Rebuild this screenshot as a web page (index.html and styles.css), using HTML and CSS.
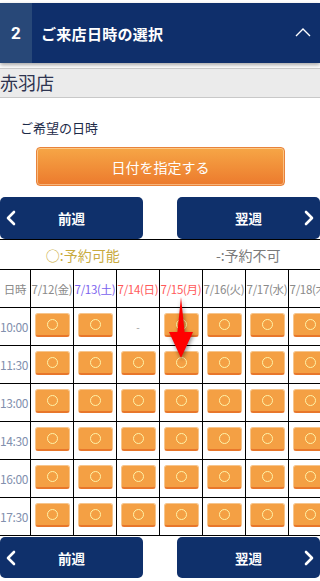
FILE: index.html
```html
<!DOCTYPE html>
<html lang="ja">
<head>
<meta charset="utf-8">
<title>ご来店日時の選択</title>
<link rel="stylesheet" href="styles.css">
</head>
<body>
<div class="page">
  <header class="step-head">
    <span class="step-num">2</span>
    <h2 class="step-title">ご来店日時の選択</h2>
    <svg class="step-toggle" width="16" height="10" viewBox="0 0 16 10"><polyline points="1,9 8,2 15,9" fill="none" stroke="#fff" stroke-width="1.4"/></svg>
  </header>

  <div class="store">赤羽店</div>

  <p class="hope-label">ご希望の日時</p>
  <button class="date-btn">日付を指定する</button>

  <nav class="week-nav top">
    <button class="week-btn prev">
      <svg class="chev" width="10" height="16" viewBox="0 0 10 16"><polyline points="8,2 2,8 8,14" fill="none" stroke="#fff" stroke-width="2.6" stroke-linecap="round" stroke-linejoin="round"/></svg>
      <span>前週</span>
    </button>
    <button class="week-btn next">
      <span>翌週</span>
      <svg class="chev" width="10" height="16" viewBox="0 0 10 16"><polyline points="2,2 8,8 2,14" fill="none" stroke="#fff" stroke-width="2.6" stroke-linecap="round" stroke-linejoin="round"/></svg>
    </button>
  </nav>

  <div class="schedule">
    <div class="schedule-inner">
      <div class="legend">
        <span class="legend-ok">○:予約可能</span>
        <span class="legend-ng">-:予約不可</span>
      </div>
      <div class="grid">
        <div class="cell head">日時</div>
        <div class="cell head">7/12(金)</div>
        <div class="cell head sat">7/13(土)</div>
        <div class="cell head sun">7/14(日)</div>
        <div class="cell head sun">7/15(月)</div>
        <div class="cell head">7/16(火)</div>
        <div class="cell head">7/17(水)</div>
        <div class="cell head">7/18(木)</div>

        <div class="cell time">10:00</div>
        <div class="cell slot"><button class="slot-btn"><i class="ring"></i></button></div>
        <div class="cell slot"><button class="slot-btn"><i class="ring"></i></button></div>
        <div class="cell none">-</div>
        <div class="cell slot"><button class="slot-btn"><i class="ring"></i></button></div>
        <div class="cell slot"><button class="slot-btn"><i class="ring"></i></button></div>
        <div class="cell slot"><button class="slot-btn"><i class="ring"></i></button></div>
        <div class="cell slot"><button class="slot-btn"><i class="ring"></i></button></div>

        <div class="cell time">11:30</div>
        <div class="cell slot"><button class="slot-btn"><i class="ring"></i></button></div>
        <div class="cell slot"><button class="slot-btn"><i class="ring"></i></button></div>
        <div class="cell slot"><button class="slot-btn"><i class="ring"></i></button></div>
        <div class="cell slot"><button class="slot-btn"><i class="ring"></i></button></div>
        <div class="cell slot"><button class="slot-btn"><i class="ring"></i></button></div>
        <div class="cell slot"><button class="slot-btn"><i class="ring"></i></button></div>
        <div class="cell slot"><button class="slot-btn"><i class="ring"></i></button></div>

        <div class="cell time">13:00</div>
        <div class="cell slot"><button class="slot-btn"><i class="ring"></i></button></div>
        <div class="cell slot"><button class="slot-btn"><i class="ring"></i></button></div>
        <div class="cell slot"><button class="slot-btn"><i class="ring"></i></button></div>
        <div class="cell slot"><button class="slot-btn"><i class="ring"></i></button></div>
        <div class="cell slot"><button class="slot-btn"><i class="ring"></i></button></div>
        <div class="cell slot"><button class="slot-btn"><i class="ring"></i></button></div>
        <div class="cell slot"><button class="slot-btn"><i class="ring"></i></button></div>

        <div class="cell time">14:30</div>
        <div class="cell slot"><button class="slot-btn"><i class="ring"></i></button></div>
        <div class="cell slot"><button class="slot-btn"><i class="ring"></i></button></div>
        <div class="cell slot"><button class="slot-btn"><i class="ring"></i></button></div>
        <div class="cell slot"><button class="slot-btn"><i class="ring"></i></button></div>
        <div class="cell slot"><button class="slot-btn"><i class="ring"></i></button></div>
        <div class="cell slot"><button class="slot-btn"><i class="ring"></i></button></div>
        <div class="cell slot"><button class="slot-btn"><i class="ring"></i></button></div>

        <div class="cell time">16:00</div>
        <div class="cell slot"><button class="slot-btn"><i class="ring"></i></button></div>
        <div class="cell slot"><button class="slot-btn"><i class="ring"></i></button></div>
        <div class="cell slot"><button class="slot-btn"><i class="ring"></i></button></div>
        <div class="cell slot"><button class="slot-btn"><i class="ring"></i></button></div>
        <div class="cell slot"><button class="slot-btn"><i class="ring"></i></button></div>
        <div class="cell slot"><button class="slot-btn"><i class="ring"></i></button></div>
        <div class="cell slot"><button class="slot-btn"><i class="ring"></i></button></div>

        <div class="cell time">17:30</div>
        <div class="cell slot"><button class="slot-btn"><i class="ring"></i></button></div>
        <div class="cell slot"><button class="slot-btn"><i class="ring"></i></button></div>
        <div class="cell slot"><button class="slot-btn"><i class="ring"></i></button></div>
        <div class="cell slot"><button class="slot-btn"><i class="ring"></i></button></div>
        <div class="cell slot"><button class="slot-btn"><i class="ring"></i></button></div>
        <div class="cell slot"><button class="slot-btn"><i class="ring"></i></button></div>
        <div class="cell slot"><button class="slot-btn"><i class="ring"></i></button></div>
      </div>
    </div>
  </div>

  <nav class="week-nav bottom">
    <button class="week-btn prev">
      <svg class="chev" width="10" height="16" viewBox="0 0 10 16"><polyline points="8,2 2,8 8,14" fill="none" stroke="#fff" stroke-width="2.6" stroke-linecap="round" stroke-linejoin="round"/></svg>
      <span>前週</span>
    </button>
    <button class="week-btn next">
      <span>翌週</span>
      <svg class="chev" width="10" height="16" viewBox="0 0 10 16"><polyline points="2,2 8,8 2,14" fill="none" stroke="#fff" stroke-width="2.6" stroke-linecap="round" stroke-linejoin="round"/></svg>
    </button>
  </nav>

  <svg class="pointer" width="30" height="66" viewBox="0 0 30 66">
    <polygon points="15,1 18.6,36 27,36 15,62 3,36 11.4,36" fill="#ff0000"/>
  </svg>
</div>
</body>
</html>
```

FILE: styles.css
```css
* { box-sizing: border-box; }

html, body {
  margin: 0;
  padding: 0;
  background: #fff;
}

body {
  font-family: "Noto Sans CJK JP", "Noto Sans", sans-serif;
  color: #333;
}

.page {
  position: relative;
  width: 320px;
  overflow: hidden;
  padding-top: 3px;
}

/* step header */
.step-head {
  display: flex;
  align-items: center;
  height: 60px;
  background: #0f2f6b;
  box-shadow: 0 2px 4px rgba(0, 0, 0, 0.35);
}

.step-num {
  width: 32px;
  height: 100%;
  display: flex;
  align-items: center;
  justify-content: center;
  background: #284878;
  color: #fff;
  font-family: "Roboto", "Noto Sans", sans-serif;
  font-weight: 700;
  font-size: 17px;
}

.step-title {
  flex: 1;
  margin: 0;
  padding-left: 9px;
  color: #fff;
  font-size: 15px;
  font-weight: 700;
  letter-spacing: 0.3px;
}

.step-toggle {
  margin-right: 9px;
  margin-top: -2px;
}

/* store band */
.store {
  margin-top: 5px;
  height: 30px;
  border-top: 1px solid #c8c8c8;
  border-bottom: 1px solid #c8c8c8;
  background: #ebebeb;
  font-size: 18px;
  line-height: 27px;
  color: #2e3450;
}

.hope-label {
  margin: 21px 0 0 20px;
  font-size: 13px;
  line-height: 18px;
  color: #1c2a48;
}

.date-btn {
  display: block;
  margin: 10px 0 0 36px;
  width: 249px;
  height: 39px;
  border: 1px solid #e9823a;
  border-radius: 4px;
  background: linear-gradient(#f6a646, #ec7a2d);
  box-shadow: inset 0 0 0 1px rgba(255, 230, 190, 0.55);
  color: #fff;
  font-family: inherit;
  font-size: 14px;
  padding: 0;
}

/* week navigation */
.week-nav {
  display: flex;
  justify-content: space-between;
}

.week-nav.top { margin-top: 11px; }
.week-nav.bottom { margin-top: 1px; }

.week-btn {
  position: relative;
  width: 143px;
  height: 42px;
  border: none;
  border-radius: 5px;
  background: #0f306b;
  color: #fff;
  font-family: inherit;
  font-size: 13.5px;
  font-weight: 700;
  display: flex;
  align-items: center;
  justify-content: center;
  padding: 0;
}

.week-nav.bottom .week-btn { height: 41px; }

.week-btn .chev {
  position: absolute;
  top: 50%;
  margin-top: -8px;
}

.week-btn.prev .chev { left: 6px; }
.week-btn.next .chev { right: 6px; }

/* schedule */
.schedule {
  width: 320px;
  overflow: hidden;
}

.schedule-inner {
  width: 331px;
}

.legend {
  display: flex;
  height: 30px;
  border-top: 1px solid #000;
  align-items: center;
  font-size: 14px;
}

.legend span {
  flex: 1;
  text-align: center;
}

.legend-ok { color: #c9ab3e; }
.legend-ng { color: #7a7a7a; }

.grid {
  display: grid;
  grid-template-columns: 30px repeat(7, 42px);
  grid-auto-rows: 37px;
  gap: 1px;
  padding: 1px 0;
  background: #000;
}

.cell {
  background: #fff;
  display: flex;
  justify-content: center;
  white-space: nowrap;
}

.cell.head {
  align-items: center;
  font-size: 11.5px;
  letter-spacing: -0.3px;
  color: #8a8a8a;
}

.cell.head.sat { color: #7a62ee; }
.cell.head.sun { color: #ff5a5a; }

.cell.time {
  align-items: center;
  justify-content: flex-start;
  font-size: 12px;
  letter-spacing: -0.4px;
  color: #8290ae;
}

.cell.none {
  align-items: center;
  color: #999;
  font-size: 10px;
}

.cell.slot {
  align-items: flex-start;
  padding-top: 5px;
}

.slot-btn {
  width: 35px;
  height: 24px;
  padding: 0;
  border: 1px solid #f7c58c;
  border-bottom: 2px solid #e8772b;
  border-radius: 3px;
  background: #f4a044;
  display: flex;
  align-items: center;
  justify-content: center;
}

.ring {
  display: block;
  width: 11px;
  height: 11px;
  border: 1.4px solid #fff3a8;
  border-radius: 50%;
}

/* annotation arrow */
.pointer {
  position: absolute;
  left: 166px;
  top: 296px;
  filter: drop-shadow(1px 2px 2px rgba(0, 0, 0, 0.45));
}
```
